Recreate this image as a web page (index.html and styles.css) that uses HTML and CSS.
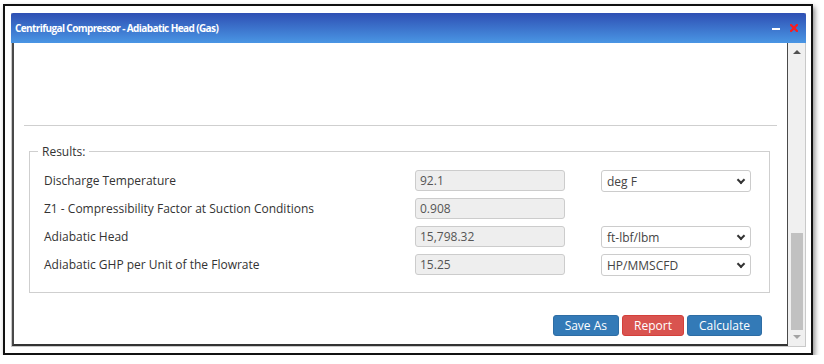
FILE: index.html
```html
<!DOCTYPE html>
<html>
<head>
<meta charset="utf-8">
<link rel="stylesheet" href="styles.css">
</head>
<body>
<div class="frame">
  <div class="dialog">
    <div class="titlebar">
      <span class="title">Centrifugal Compressor - Adiabatic Head (Gas)</span>
      <span class="tools">
        <span class="min"></span>
        <svg class="close" width="8" height="8" viewBox="0 0 8 8"><path d="M1 1L7 7M7 1L1 7" stroke="#ff1a1a" stroke-width="2.2" stroke-linecap="square"/></svg>
      </span>
    </div>
    <div class="body">
      <div class="pane">
        <div class="sep"></div>
        <fieldset class="results">
          <legend>Results:</legend>
          <div class="grid">
            <div class="label">Discharge Temperature</div>
            <div class="field">92.1</div>
            <div class="select">deg F<span class="chev"></span></div>

            <div class="label">Z1 - Compressibility Factor at Suction Conditions</div>
            <div class="field">0.908</div>
            <div></div>

            <div class="label">Adiabatic Head</div>
            <div class="field">15,798.32</div>
            <div class="select">ft-lbf/lbm<span class="chev"></span></div>

            <div class="label">Adiabatic GHP per Unit of the Flowrate</div>
            <div class="field">15.25</div>
            <div class="select">HP/MMSCFD<span class="chev"></span></div>
          </div>
        </fieldset>
        <div class="actions">
          <button class="btn blue">Save As</button>
          <button class="btn red">Report</button>
          <button class="btn blue">Calculate</button>
        </div>
      </div>
      <div class="scrollbar">
        <span class="arrow up"></span>
        <span class="track"><span class="thumb"></span></span>
        <span class="arrow down"></span>
      </div>
    </div>
  </div>
</div>
</body>
</html>
```
FILE: styles.css
```css
* { box-sizing: border-box; }
body {
  margin: 0;
  background: #fff;
  font-family: "Open Sans", "Liberation Sans", sans-serif;
}
.frame {
  margin: 4px 0 0 3px;
  width: 810px;
  height: 351px;
  border: 2px solid #111;
  box-shadow: 2px 3px 5px rgba(0,0,0,0.45);
  padding: 7px 0 0 6px;
  background: #fff;
}
.dialog {
  width: 795px;
  height: 334px;
  border: 1px solid #c9c9c9;
  border-top: none;
  display: flex;
  flex-direction: column;
}
.titlebar {
  height: 30px;
  margin: 0 -1px;
  background: linear-gradient(#2e4fb3, #4a96e4);
  display: flex;
  align-items: center;
  justify-content: space-between;
  padding: 0 8px 0 4px;
  border-radius: 2px 2px 0 0;
}
.title {
  color: #fff;
  font-weight: 700;
  font-size: 10px;
  letter-spacing: -0.6px;
}
.tools { display: flex; align-items: center; gap: 10px; }
.min { width: 8px; height: 2px; background: #fff; display: block; margin-top: 1px; }
.close { display: block; }
.body {
  flex: 1;
  display: flex;
  min-height: 0;
}
.pane {
  flex: 1;
  min-width: 0;
  border-left: 2px solid #4a4a4a;
  border-right: 1px solid #4a4a4a;
  border-bottom: 2px solid #333;
  display: flex;
  flex-direction: column;
}
.sep {
  margin: 82px 10px 0 10px;
  border-top: 1px solid #cfcfcf;
}
.results {
  margin: 17px 17px 0 15px;
  border: 1px solid #cfcfcf;
  padding: 10px 14px 16px 14px;
  min-width: 0;
}
.results legend {
  font-size: 12px;
  color: #333;
  padding: 0 4px;
  margin-left: -6px;
  line-height: 17px;
}
.grid {
  display: grid;
  grid-template-columns: 335px 150px 150px;
  column-gap: 36px;
  grid-auto-rows: 22px;
  row-gap: 6px;
  align-items: start;
}
.label {
  font-size: 12px;
  color: #333;
  line-height: 21px;
}
.field {
  height: 21px;
  background: #eee;
  border: 1px solid #ccc;
  border-radius: 3px;
  font-size: 12px;
  color: #555;
  padding: 0 4px;
  line-height: 19px;
}
.select {
  height: 22px;
  background: #fff;
  border: 1px solid #ccc;
  border-radius: 3px;
  font-size: 12px;
  color: #444;
  padding: 0 5px;
  line-height: 21px;
  position: relative;
}
.chev {
  position: absolute;
  right: 6px;
  top: 6px;
  width: 6px;
  height: 6px;
  border-right: 2px solid #333;
  border-bottom: 2px solid #333;
  transform: rotate(45deg);
}
.actions {
  display: flex;
  justify-content: flex-end;
  gap: 3px;
  margin: 22px 25px 0 0;
}
.btn {
  height: 21px;
  border-radius: 3px;
  font-family: "Open Sans", "Liberation Sans", sans-serif;
  font-size: 12px;
  color: #fff;
  padding: 0 11px;
  line-height: 19px;
}
.blue { background: #337ab7; border: 1px solid #2e6da4; }
.red { background: #d9534f; border: 1px solid #d43f3a; }
.scrollbar {
  width: 17px;
  background: #f0f0f0;
  display: flex;
  flex-direction: column;
  align-items: center;
}
.arrow {
  width: 0; height: 0;
  border-left: 4px solid transparent;
  border-right: 4px solid transparent;
  margin: 7px 0;
}
.up { border-bottom: 4px solid #505050; }
.down { border-top: 4px solid #a3a3a3; }
.track { flex: 1; width: 100%; position: relative; }
.thumb {
  position: absolute;
  left: 3px; right: 2px;
  top: 172px; height: 97px;
  background: #c1c1c1;
}
```
